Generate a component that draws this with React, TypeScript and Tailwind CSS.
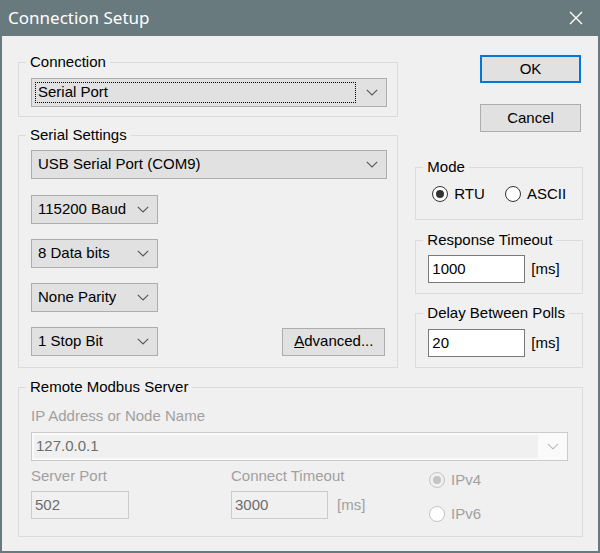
import React from 'react';

const Chevron: React.FC<{ disabled?: boolean }> = ({ disabled }) => (
  <svg width="12" height="7" viewBox="0 0 12 7" className="shrink-0">
    <polyline points="0.8,0.8 6,6 11.2,0.8" fill="none" stroke={disabled ? '#bfbfbf' : '#5a5a5a'} strokeWidth="1.2" />
  </svg>
);

const Combo: React.FC<{ text: string; className?: string; focused?: boolean }> = ({ text, className = '', focused }) => (
  <div className={`flex items-center h-[29px] border border-[#adadad] bg-[#e1e1e1] ${className}`}>
    <div className="flex-1 h-full p-[3px]">
      <div className={`h-full flex items-center pl-[3px] ${focused ? 'border border-dotted border-black' : ''}`}>
        <span className={focused ? '-ml-px' : ''}>{text}</span>
      </div>
    </div>
    <div className="w-[27px] flex justify-center pr-[2px]">
      <Chevron />
    </div>
  </div>
);

// groupbox: fieldset keeps the legend cut into the border, padding goes on the inner div
const Group: React.FC<{ label: string; className?: string; inner?: string; children: React.ReactNode }> = ({
  label,
  className = '',
  inner = '',
  children,
}) => (
  <fieldset className={`border border-[#dcdcdc] ${className}`}>
    <legend className="ml-[7px] px-[4px] leading-[18px]">{label}</legend>
    <div className={inner}>{children}</div>
  </fieldset>
);

const Radio: React.FC<{ label: string; checked?: boolean; disabled?: boolean }> = ({ label, checked, disabled }) => (
  <div className="flex items-center gap-[6px] h-[18px]">
    <span
      className={`w-[16px] h-[16px] rounded-full border flex items-center justify-center ${
        disabled ? 'border-[#c4c4c4]' : 'border-[#333333]'
      } ${disabled && checked ? 'bg-[#f0f0f0]' : 'bg-white'}`}
    >
      {checked && <span className={`w-[8px] h-[8px] rounded-full ${disabled ? 'bg-[#c4c4c4]' : 'bg-[#333333]'}`} />}
    </span>
    <span className={disabled ? 'text-[#a0a0a0]' : ''}>{label}</span>
  </div>
);

const Edit: React.FC<{ value: string; className?: string; disabled?: boolean }> = ({ value, className = '', disabled }) => (
  <div
    className={`h-[28px] flex items-center pl-[3px] border ${
      disabled ? 'border-[#cccccc] bg-[#f0f0f0] text-[#6d6d6d]' : 'border-[#7a7a7a] bg-white'
    } ${className}`}
  >
    {value}
  </div>
);

const Button: React.FC<{ className?: string; primary?: boolean; children: React.ReactNode }> = ({ className = '', primary, children }) => (
  <div
    className={`h-[28px] flex items-center justify-center bg-[#e1e1e1] ${
      primary ? 'border-2 border-[#0078d7]' : 'border border-[#adadad]'
    } ${className}`}
  >
    {children}
  </div>
);

export default function App() {
  return (
    <div className="w-[600px] h-[553px] flex flex-col bg-[#697a7e] px-[2px] pb-[2px] font-['Liberation_Sans',Arial,sans-serif] text-[15px] text-black">
      <div className="h-[36px] shrink-0 flex items-center justify-between pl-[6px] pr-[15px]">
        <span className="text-white text-[17px] font-['Noto_Sans',sans-serif]">Connection Setup</span>
        <svg width="14" height="14" viewBox="0 0 14 14">
          <path d="M1 1 L13 13 M13 1 L1 13" stroke="#ffffff" strokeWidth="1.4" />
        </svg>
      </div>

      <div className="flex-1 bg-[#f0f0f0] pl-[16px] pr-[15px] pt-[17px]">
        <div className="flex gap-[17px]">
          <div className="w-[381px] flex flex-col">
            <Group label="Connection" inner="pl-[12px] pr-[10px] pt-[7px] pb-[9px]">
              <Combo text="Serial Port" focused />
            </Group>

            <Group label="Serial Settings" className="mt-[9px]" inner="pl-[12px] pr-[10px] pt-[6px] pb-[11px]">
              <Combo text="USB Serial Port (COM9)" />
              <Combo text="115200 Baud" className="w-[127px] mt-[16px]" />
              <Combo text="8 Data bits" className="w-[127px] mt-[15px]" />
              <Combo text="None Parity" className="w-[127px] mt-[15px]" />
              <div className="flex items-center justify-between mt-[15px]">
                <Combo text="1 Stop Bit" className="w-[127px]" />
                <Button className="w-[103px] mr-[2px]">
                  <span>
                    <span className="underline">A</span>dvanced...
                  </span>
                </Button>
              </div>
            </Group>
          </div>

          <div className="w-[168px] flex flex-col">
            <Button primary className="self-end w-[101px] mr-[2px] mt-[2px]">OK</Button>
            <Button className="self-end w-[101px] mr-[2px] mt-[21px]">Cancel</Button>

            <Group label="Mode" className="mt-[26px]" inner="pl-[16px] pt-[9px] pb-[16px]">
              <div className="flex items-center gap-[20px]">
                <Radio label="RTU" checked />
                <Radio label="ASCII" />
              </div>
            </Group>

            <Group label="Response Timeout" className="mt-[11px]" inner="pl-[12px] pt-[6px] pb-[10px]">
              <div className="flex items-center gap-[6px]">
                <Edit value="1000" className="w-[97px]" />
                <span>[ms]</span>
              </div>
            </Group>

            <Group label="Delay Between Polls" className="mt-[10px]" inner="pl-[12px] pt-[7px] pb-[10px]">
              <div className="flex items-center gap-[6px]">
                <Edit value="20" className="w-[97px]" />
                <span>[ms]</span>
              </div>
            </Group>
          </div>
        </div>

        <Group label="Remote Modbus Server" className="mt-[10px]" inner="pl-[12px] pr-[14px] pt-[11px] pb-[13px]">
          <div className="leading-[18px] text-[#a0a0a0]">IP Address or Node Name</div>
          <div className="mt-[7px] h-[29px] flex items-center border border-[#cccccc] bg-[#fafafa]">
            <div className="flex-1 h-full p-[2px]">
              <div className="h-full flex items-center pl-[2px] bg-[#f0f0f0] text-[#6d6d6d]">127.0.0.1</div>
            </div>
            <div className="w-[27px] flex justify-center pr-[2px]">
              <Chevron disabled />
            </div>
          </div>
          <div className="flex mt-[6px]">
            <div className="w-[200px]">
              <div className="leading-[18px] text-[#a0a0a0]">Server Port</div>
              <Edit value="502" disabled className="w-[98px] mt-[6px]" />
            </div>
            <div className="w-[198px]">
              <div className="leading-[18px] text-[#a0a0a0]">Connect Timeout</div>
              <div className="flex items-center gap-[9px] mt-[6px]">
                <Edit value="3000" disabled className="w-[97px]" />
                <span className="text-[#a0a0a0]">[ms]</span>
              </div>
            </div>
            <div className="flex flex-col gap-[16px] pt-[4px]">
              <Radio label="IPv4" checked disabled />
              <Radio label="IPv6" disabled />
            </div>
          </div>
        </Group>
      </div>
    </div>
  );
}
